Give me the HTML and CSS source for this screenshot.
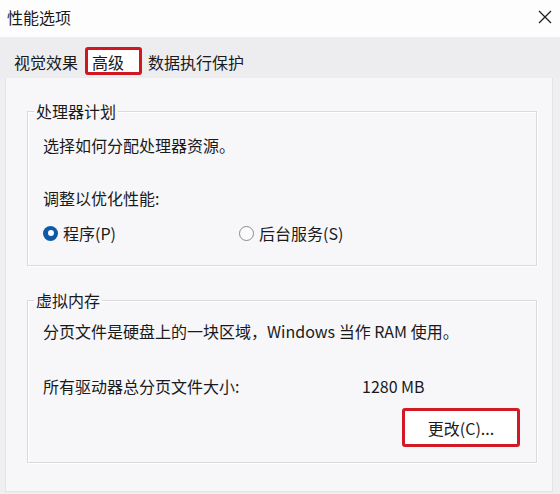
FILE: index.html
```html
<!DOCTYPE html>
<html lang="zh-CN">
<head>
<meta charset="utf-8">
<title>性能选项</title>
<link rel="stylesheet" href="styles.css">
</head>
<body>
<div class="window">
  <div class="titlebar">
    <span class="title">性能选项</span>
    <svg class="close" viewBox="0 0 14 14" width="14" height="14" aria-hidden="true">
      <path d="M1 1L13 13M13 1L1 13" stroke="#1f1f1f" stroke-width="1.3" fill="none"/>
    </svg>
  </div>
  <div class="tabs">
    <span class="tab">视觉效果</span>
    <span class="tab active">高级</span>
    <span class="tab last">数据执行保护</span>
  </div>
  <div class="page">
    <fieldset class="group cpu">
      <legend>处理器计划</legend>
      <p class="line">选择如何分配处理器资源。</p>
      <p class="line adjust">调整以优化性能:</p>
      <div class="radios">
        <label class="radio first"><span class="dot checked"></span>程序(P)</label>
        <label class="radio"><span class="dot"></span>后台服务(S)</label>
      </div>
    </fieldset>
    <fieldset class="group vm">
      <legend>虚拟内存</legend>
      <p class="line">分页文件是硬盘上的一块区域，Windows 当作 RAM 使用。</p>
      <div class="size-row">
        <span>所有驱动器总分页文件大小:</span>
        <span>1280 MB</span>
      </div>
      <div class="actions">
        <button class="change" type="button">更改(C)...</button>
      </div>
    </fieldset>
  </div>
</div>
</body>
</html>
```
FILE: styles.css
```css
html, body {
  margin: 0;
  padding: 0;
}
body {
  width: 560px;
  height: 494px;
  overflow: hidden;
  background: #efeff2;
  color: #1a1a1a;
  font-family: "Noto Sans CJK SC", "Microsoft YaHei", sans-serif;
  font-size: 16px;
  line-height: 20px;
}
.window {
  width: 560px;
  height: 494px;
}
.titlebar {
  height: 37px;
  box-sizing: border-box;
  background: #fdfdfd;
  display: flex;
  justify-content: space-between;
  align-items: flex-start;
  padding: 7px 8px 0 7px;
}
.close {
  margin-top: 3px;
}
.tabs {
  height: 41px;
  box-sizing: border-box;
  background: #ededf0;
  display: flex;
  align-items: flex-start;
  padding-top: 10px;
}
.tab {
  height: 28px;
  line-height: 30px;
  box-sizing: border-box;
  white-space: nowrap;
}
.tab:first-child {
  margin-left: 8px;
  padding: 0 6px;
}
.tab.active {
  margin-left: 1px;
  width: 57px;
  border: 3px solid #d0161f;
  border-radius: 3px;
  background: #ffffff;
  padding-left: 4px;
  line-height: 24px;
}
.tab.last {
  margin-left: 6px;
}
.page {
  margin: 0 7px 0 5px;
  background: #f7f7fa;
  border: 1px solid #e3e3e7;
  border-top: none;
  padding: 23px 15px 28px 21px;
}
.group {
  margin: 0;
  min-width: 0;
  border: 1px solid #d9d9de;
  box-shadow: inset 1px 1px 0 #ffffff, 1px 1px 0 #ffffff;
  padding: 14px 16px 22px 15px;
}
.group legend {
  padding: 0 2px;
  margin-left: -9px;
  line-height: 20px;
}
.line {
  margin: 0;
  white-space: nowrap;
}
.adjust {
  margin-top: 33px;
}
.radios {
  margin-top: 15px;
  height: 20px;
  display: flex;
  align-items: center;
}
.radio {
  display: flex;
  align-items: center;
  gap: 5px;
  white-space: nowrap;
}
.radio.first {
  width: 196px;
}
.dot {
  width: 15px;
  height: 15px;
  box-sizing: border-box;
  border-radius: 50%;
  border: 1px solid #8a8a8e;
  background: #fbfbfc;
  position: relative;
}
.dot.checked {
  border: none;
  background: #0e5aa6;
}
.dot.checked::after {
  content: "";
  position: absolute;
  left: 4.5px;
  top: 4.5px;
  width: 6px;
  height: 6px;
  border-radius: 50%;
  background: #ffffff;
}
.vm {
  margin-top: 24px;
  padding-top: 11px;
  padding-bottom: 15px;
}
.size-row {
  margin-top: 35px;
  display: grid;
  grid-template-columns: 319px auto;
  white-space: nowrap;
}
.actions {
  margin-top: 12px;
  display: flex;
  justify-content: flex-end;
}
.change {
  width: 118px;
  height: 39px;
  box-sizing: border-box;
  border: 3px solid #d11a24;
  border-radius: 3px;
  background: #ffffff;
  color: #1a1a1a;
  font-family: inherit;
  font-size: 16px;
  line-height: 20px;
  padding: 0;
  margin: 0;
}
```
